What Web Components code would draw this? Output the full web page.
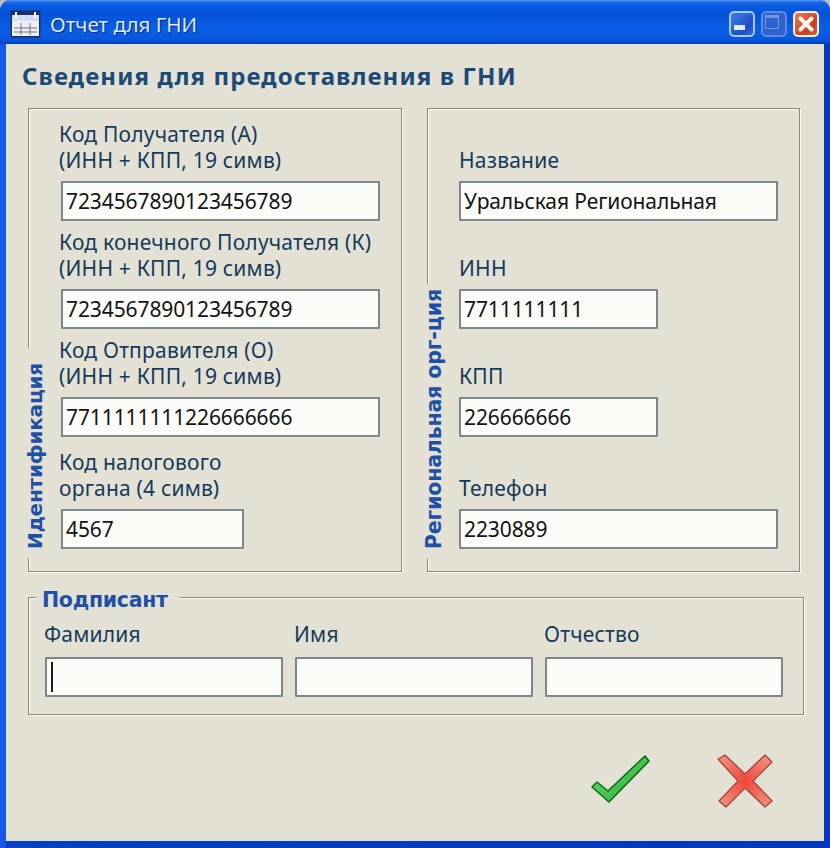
<!DOCTYPE html>
<html lang="ru">
<head>
<meta charset="utf-8">
<title>Отчет для ГНИ</title>
<style>
  html, body { margin: 0; padding: 0; background: #b9bdc4; }
  body { width: 830px; height: 848px; overflow: hidden; font-family: "Noto Sans", "DejaVu Sans", sans-serif; }
  .row { display: flex; gap: 25px; }
  .names { display: flex; gap: 12px; }
  .names xp-field { width: 238px; }
</style>
</head>
<body>
<script>
// every element keeps its own template, same pattern for all of them
const windowTpl = document.createElement('template');
windowTpl.innerHTML = `
  <style>
    :host { display: flex; flex-direction: column; width: 830px; height: 848px; box-sizing: border-box; border-radius: 11px 11px 0 0; overflow: hidden; background: linear-gradient(90deg, #1559e6 0, #1559e6 6px, #0b3fc4 6px, #0836b8 100%); }
    .title { height: 44px; flex: none; display: flex; align-items: center; box-sizing: border-box; padding: 4px 11px 0 10px;
      background: linear-gradient(#5d9df2 0, #1f6fe8 2px, #0a5ce2 5px, #0552d8 14px, #0a5fe6 30px, #0757dd 40px, #0340b8 44px); }
    .caption { margin-left: 9px; font-size: 20.6px; color: #dfeafc; text-shadow: 1px 1px 1px #0a2a80; flex: 1; }
    .btns { display: flex; gap: 6px; }
    .body { flex: 1; margin: 0 6px 8px 6px; background: #e3e1d4; box-shadow: 0 1px 0 #cfe4f6; display: flex; flex-direction: column; padding: 0 20px 0 22px; position: relative; }
  </style>
  <div class="title">
    <slot name="icon"></slot>
    <div class="caption"><slot name="caption"></slot></div>
    <div class="btns"><slot name="buttons"></slot></div>
  </div>
  <div class="body"><slot></slot></div>`;

class XpWindow extends HTMLElement {
  constructor() {
    super();
    this.attachShadow({mode: 'open'});
    this.shadowRoot.appendChild(windowTpl.content.cloneNode(true));
  }
}

const capTpl = document.createElement('template');
capTpl.innerHTML = `
  <style>
    :host { display: block; width: 26px; height: 26px; box-sizing: border-box; border-radius: 5px; border: 2px solid #a9c8f2; overflow: hidden; position: relative; }
    :host([kind=min]) { background: linear-gradient(135deg, #3f7fe6, #1c4fc4 70%, #2f68d8); }
    :host([kind=min])::after { content: ""; position: absolute; left: 3px; bottom: 5px; width: 11px; height: 5px; background: #dfeafa; }
    :host([kind=max]) { background: #2f62cf; border-color: #5c8be0; }
    :host([kind=max])::after { content: ""; position: absolute; left: 2px; top: 2px; width: 14px; height: 14px; box-sizing: border-box; border: 1px solid #6f98e4; border-top-width: 3px; }
    :host([kind=close]) { background: linear-gradient(135deg, #e4805a, #c8401f 65%, #d9603a); border-color: #f0f0f0; }
    svg { display: block; width: 22px; height: 22px; }
  </style>
  <slot></slot>`;

class XpCaptionButton extends HTMLElement {
  constructor() {
    super();
    this.attachShadow({mode: 'open'});
    this.shadowRoot.appendChild(capTpl.content.cloneNode(true));
  }

  connectedCallback() {
    if (this.getAttribute('kind') === 'close') {
      const wrap = document.createElement('div');
      wrap.innerHTML = `<svg viewBox="0 0 22 22"><path d="M5.5 5.5 16.5 16.5M16.5 5.5 5.5 16.5" stroke="#fbf2ea" stroke-width="4" stroke-linecap="round"/></svg>`;
      this.shadowRoot.appendChild(wrap.firstChild);
    }
  }
}

const groupTpl = document.createElement('template');
groupTpl.innerHTML = `
  <style>
    :host { display: block; box-sizing: border-box; position: relative; border: 1px solid #8a8a78; box-shadow: 1px 1px 0 #fbfaf2, inset 1px 1px 0 #fbfaf2; }
    .legend { position: absolute; color: #1f50a8; font-weight: 700; background: #e3e1d4; font-family: "DejaVu Sans", sans-serif; white-space: nowrap; }
    :host([side]) .legend { writing-mode: vertical-rl; transform: rotate(180deg); left: -6px; bottom: 13px; font-size: var(--legend-size, 20px); line-height: 24px; padding: 9px 0 var(--legend-end, 5px); letter-spacing: -0.2px; }
    :host([top]) .legend { left: 7px; top: -11px; font-size: 20.5px; line-height: 26px; padding: 0 12px 0 6px; letter-spacing: -0.3px; }
  </style>
  <div class="legend"><slot name="legend"></slot></div>
  <slot></slot>`;

class XpGroup extends HTMLElement {
  constructor() {
    super();
    this.attachShadow({mode: 'open'});
    this.shadowRoot.appendChild(groupTpl.content.cloneNode(true));
  }
}

const fieldTpl = document.createElement('template');
fieldTpl.innerHTML = `
  <style>
    :host { display: block; color: #153a5c; font-size: 21px; line-height: 26px; }
    .label { margin-bottom: var(--label-gap, 8px); margin-left: var(--label-shift, 0); letter-spacing: 0.2px; white-space: pre; }
    .box { box-sizing: border-box; height: 40px; width: var(--w, 100%); border: 2px solid #7d8788; border-radius: 1px; background: #fbfbf8; color: #141414; padding: 0 3px; display: flex; align-items: center; font-size: 21px; letter-spacing: -0.1px; white-space: nowrap; }
    :host([caret]) .box::before { content: ""; width: 2px; height: 30px; background: #1a1a1a; margin-left: 1px; }
  </style>
  <div class="label"><slot name="label"></slot></div>
  <div class="box"><slot></slot></div>`;

class XpField extends HTMLElement {
  constructor() {
    super();
    this.attachShadow({mode: 'open'});
    this.shadowRoot.appendChild(fieldTpl.content.cloneNode(true));
  }

  connectedCallback() {
    if (this.hasAttribute('w')) this.style.setProperty('--w', this.getAttribute('w') + 'px');
  }
}

const colTpl = document.createElement('template');
colTpl.innerHTML = `
  <style>
    :host { display: flex; flex-direction: column; }
  </style>
  <slot></slot>`;

class XpColumn extends HTMLElement {
  constructor() {
    super();
    this.attachShadow({mode: 'open'});
    this.shadowRoot.appendChild(colTpl.content.cloneNode(true));
  }
}

customElements.define('xp-window', XpWindow);
customElements.define('xp-caption-button', XpCaptionButton);
customElements.define('xp-group', XpGroup);
customElements.define('xp-field', XpField);
customElements.define('xp-column', XpColumn);
</script>

<xp-window>
  <svg slot="icon" width="31" height="28" viewBox="0 0 31 28" style="display:block">
    <rect x="0.5" y="0.5" width="30" height="27" fill="#1b2f6b"/>
    <rect x="2" y="5" width="27" height="6" fill="#cfe0f6"/>
    <rect x="2" y="11" width="27" height="15" fill="#eef0f2"/>
    <rect x="5" y="2" width="2" height="6" fill="#fff"/>
    <rect x="24" y="2" width="2" height="6" fill="#fff"/>
    <path d="M4 18H27M4 22H27M11 13V25M20 13V25" stroke="#6a7488" stroke-width="1" fill="none"/>
  </svg>
  <span slot="caption">Отчет для ГНИ</span>
  <xp-caption-button slot="buttons" kind="min"></xp-caption-button>
  <xp-caption-button slot="buttons" kind="max"></xp-caption-button>
  <xp-caption-button slot="buttons" kind="close"></xp-caption-button>

  <div style="font:700 24px/30px 'Noto Sans',sans-serif;color:#1c4a78;padding:17px 0 17px;letter-spacing:1.1px;margin-left:-6px">Сведения для предоставления в ГНИ</div>

  <div class="row">
    <xp-group side style="width:374px;height:464px;padding:12px 21px 0 32px;--label-shift:-2px;--legend-end:15px;">
      <span slot="legend">Идентификация</span>
      <xp-column style="gap:8px">
        <xp-field w="319"><span slot="label">Код Получателя (А)
(ИНН + КПП, 19 симв)</span>7234567890123456789</xp-field>
        <xp-field w="319"><span slot="label">Код конечного Получателя (К)
(ИНН + КПП, 19 симв)</span>7234567890123456789</xp-field>
        <xp-field w="319"><span slot="label">Код Отправителя (О)
(ИНН + КПП, 19 симв)</span>7711111111226666666</xp-field>
        <xp-field w="183" style="margin-top:4px"><span slot="label">Код налогового
органа (4 симв)</span>4567</xp-field>
      </xp-column>
    </xp-group>
    <xp-group side style="width:373px;height:464px;padding:38px 21px 0 31px;--legend-size:20.6px;">
      <span slot="legend">Региональная орг-ция</span>
      <xp-column style="gap:34px">
        <xp-field w="319"><span slot="label">Название</span>Уральская Региональная</xp-field>
        <xp-field w="199"><span slot="label">ИНН</span>7711111111</xp-field>
        <xp-field w="199"><span slot="label">КПП</span>226666666</xp-field>
        <xp-field w="319" style="margin-top:4px"><span slot="label">Телефон</span>2230889</xp-field>
      </xp-column>
    </xp-group>
  </div>

  <xp-group top style="margin-top:25px;width:776px;height:118px;padding:23px 20px 0 16px;">
    <span slot="legend">Подписант</span>
    <div class="names" style="--label-gap:10px;--label-shift:-1px">
      <xp-field caret><span slot="label">Фамилия</span></xp-field>
      <xp-field><span slot="label">Имя</span></xp-field>
      <xp-field><span slot="label">Отчество</span></xp-field>
    </div>
  </xp-group>

  <div style="display:flex;justify-content:flex-end;gap:64px;margin-top:38px;padding-right:28px;">
    <svg width="62" height="52" viewBox="590 753 62 52" style="display:block">
      <defs><linearGradient id="g" x1="0" y1="0" x2="1" y2="1"><stop offset="0" stop-color="#74e274"/><stop offset="1" stop-color="#1ea82c"/></linearGradient></defs>
      <path d="M592 787 597 782 608 791 645 756 649 761 609 802Z" fill="url(#g)" stroke="#116b18" stroke-width="1.6" stroke-linejoin="round"/>
    </svg>
    <svg width="60" height="56" viewBox="716 752 60 56" style="display:block">
      <defs><radialGradient id="r" gradientUnits="userSpaceOnUse" cx="745" cy="780" r="30"><stop offset="0" stop-color="#f0463a"/><stop offset="1" stop-color="#f08a78"/></radialGradient></defs>
      <path d="M718 758 725 754 745 773 765 754 772 761 753 780 772 800 765 806 745 787 726 806 719 800 738 780Z" fill="url(#r)" stroke="#a8483c" stroke-width="1.4" stroke-linejoin="round"/>
    </svg>
  </div>
</xp-window>
</body>
</html>
